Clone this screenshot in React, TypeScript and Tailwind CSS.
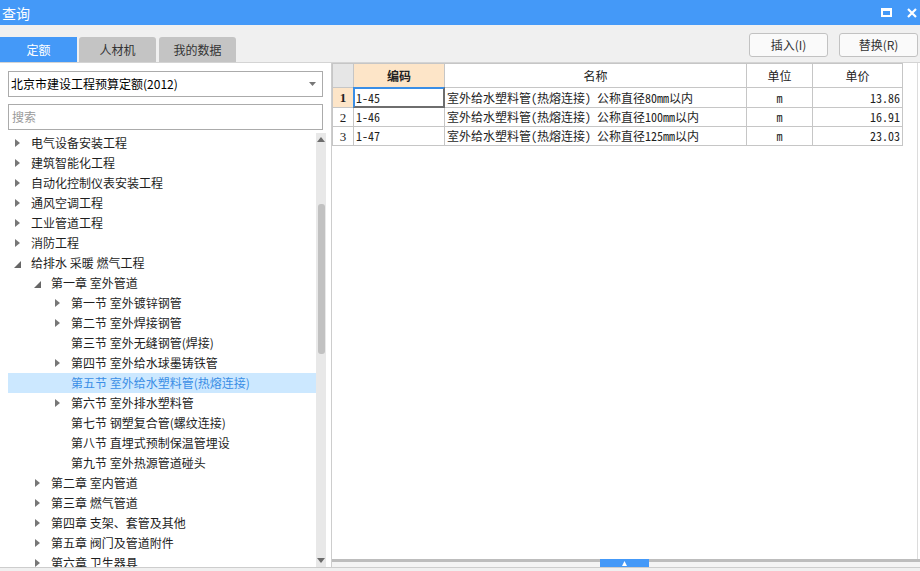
import React from 'react';

type Node = { level: 1 | 2 | 3; label: string; arrow: 'closed' | 'open' | 'none'; selected?: boolean };

const tree: Node[] = [
  { level: 1, label: '电气设备安装工程', arrow: 'closed' },
  { level: 1, label: '建筑智能化工程', arrow: 'closed' },
  { level: 1, label: '自动化控制仪表安装工程', arrow: 'closed' },
  { level: 1, label: '通风空调工程', arrow: 'closed' },
  { level: 1, label: '工业管道工程', arrow: 'closed' },
  { level: 1, label: '消防工程', arrow: 'closed' },
  { level: 1, label: '给排水 采暖 燃气工程', arrow: 'open' },
  { level: 2, label: '第一章 室外管道', arrow: 'open' },
  { level: 3, label: '第一节 室外镀锌钢管', arrow: 'closed' },
  { level: 3, label: '第二节 室外焊接钢管', arrow: 'closed' },
  { level: 3, label: '第三节 室外无缝钢管(焊接)', arrow: 'none' },
  { level: 3, label: '第四节 室外给水球墨铸铁管', arrow: 'closed' },
  { level: 3, label: '第五节 室外给水塑料管(热熔连接)', arrow: 'none', selected: true },
  { level: 3, label: '第六节 室外排水塑料管', arrow: 'closed' },
  { level: 3, label: '第七节 钢塑复合管(螺纹连接)', arrow: 'none' },
  { level: 3, label: '第八节 直埋式预制保温管埋设', arrow: 'none' },
  { level: 3, label: '第九节 室外热源管道碰头', arrow: 'none' },
  { level: 2, label: '第二章 室内管道', arrow: 'closed' },
  { level: 2, label: '第三章 燃气管道', arrow: 'closed' },
  { level: 2, label: '第四章 支架、套管及其他', arrow: 'closed' },
  { level: 2, label: '第五章 阀门及管道附件', arrow: 'closed' },
  { level: 2, label: '第六章 卫生器具', arrow: 'closed' },
];

const indent = { 1: 'pl-[7px]', 2: 'pl-[27px]', 3: 'pl-[47px]' };

const rows = [
  { no: '1', code: '1-45', name: '室外给水塑料管(热熔连接) 公称直径80mm以内', unit: 'm', price: '13.86' },
  { no: '2', code: '1-46', name: '室外给水塑料管(热熔连接) 公称直径100mm以内', unit: 'm', price: '16.91' },
  { no: '3', code: '1-47', name: '室外给水塑料管(热熔连接) 公称直径125mm以内', unit: 'm', price: '23.03' },
];

const Arrow = ({ kind }: { kind: Node['arrow'] }) => (
  <span className="w-[16px] h-[20px] flex items-center shrink-0">
    {kind === 'closed' && (
      <svg width="5" height="8" viewBox="0 0 5 8">
        <polygon points="0,0 5,4 0,8" fill="#777" />
      </svg>
    )}
    {kind === 'open' && (
      <svg width="7" height="7" viewBox="0 0 7 7" className="-ml-[1px] mt-[2px]">
        <polygon points="7,0 7,7 0,7" fill="#666" />
      </svg>
    )}
  </span>
);

const mono = "font-['Noto_Sans_Mono_CJK_SC','Liberation_Mono','Noto_Sans_CJK_SC',monospace]";

export default function App() {
  return (
    <div className="w-[920px] h-[571px] bg-[#f0f0f0] flex flex-col overflow-hidden font-['Noto_Sans_CJK_SC',sans-serif] text-[12px] text-[#1e1e1e]">
      {/* title bar */}
      <div className="h-[25px] bg-[#4499f8] flex items-center justify-between pl-[2px] pr-[2px] shrink-0">
        <span className="text-white text-[14px] leading-none">查询</span>
        <div className="flex items-center gap-[15px] pr-[1px]">
          <svg width="11" height="9" viewBox="0 0 11 9">
            <rect x="1" y="1.5" width="9" height="6.5" fill="none" stroke="#fff" strokeWidth="2" />
            <rect x="0" y="0" width="11" height="3" fill="#fff" />
          </svg>
          <svg width="10" height="10" viewBox="0 0 10 10">
            <path d="M1 1 L9 9 M9 1 L1 9" stroke="#fff" strokeWidth="2.2" />
          </svg>
        </div>
      </div>

      {/* tabs + buttons */}
      <div className="h-[38px] flex justify-between border-b border-[#d4d4d4] shrink-0">
        <div className="flex items-end gap-[2px] pt-[12px]">
          <div className="w-[77px] h-[25px] bg-[#4499f8] text-white flex items-center justify-center">定额</div>
          <div className="w-[77px] h-[25px] bg-[#c4c4c4] rounded-t-[3px] text-[#333] flex items-center justify-center">人材机</div>
          <div className="w-[77px] h-[25px] bg-[#c4c4c4] rounded-t-[3px] text-[#333] flex items-center justify-center ml-[1px]">我的数据</div>
        </div>
        <div className="flex gap-[11px] pt-[8px] pr-[2px]">
          <button className="w-[79px] h-[24px] bg-[#fafafa] border border-[#c2c2c2] rounded-[3px] text-[#333] text-[12px]">插入(I)</button>
          <button className="w-[79px] h-[24px] bg-[#fafafa] border border-[#c2c2c2] rounded-[3px] text-[#333] text-[12px]">替换(R)</button>
        </div>
      </div>

      {/* main */}
      <div className="h-[505px] flex border-b border-[#cdcdcd] shrink-0">
        {/* left panel */}
        <div className="w-[332px] bg-white flex flex-col pt-[8px] border-r border-[#cdcdcd] shrink-0">
          <div className="mx-[8px] h-[26px] border border-[#ababab] flex items-center justify-between pl-[2px] pr-[6px]">
            <span className="text-[12px] text-black">北京市建设工程预算定额(2012)</span>
            <svg width="7" height="4" viewBox="0 0 7 4">
              <polygon points="0,0 7,0 3.5,4" fill="#777" />
            </svg>
          </div>
          <div className="mx-[8px] mt-[7px] h-[26px] border border-[#ababab] flex items-center pl-[3px] text-[#9a9a9a]">搜索</div>
          <div className="flex flex-1 mt-[3px] overflow-hidden pl-[8px]">
            <div className="w-[308px] flex flex-col overflow-hidden">
              {tree.map((n, i) => (
                <div
                  key={i}
                  className={`h-[20px] flex items-center shrink-0 ${indent[n.level]} ${n.selected ? 'bg-[#cce8ff] text-[#3a8ee6]' : ''}`}
                >
                  <Arrow kind={n.arrow} />
                  <span className="whitespace-nowrap leading-[20px]">{n.label}</span>
                </div>
              ))}
            </div>
            <div className="w-[10px] bg-[#e8e8e8] flex flex-col items-center justify-between py-[4px]">
              <div className="flex flex-col items-center w-full">
                <svg width="8" height="5" viewBox="0 0 8 5">
                  <polygon points="0,5 8,5 4,0" fill="#6c6c6c" />
                </svg>
                <div className="w-[7px] h-[150px] mt-[62px] bg-[#c1c1c1] rounded-[3px]" />
              </div>
              <svg width="8" height="5" viewBox="0 0 8 5">
                <polygon points="0,0 8,0 4,5" fill="#6c6c6c" />
              </svg>
            </div>
          </div>
        </div>

        {/* right panel */}
        <div className="flex-1 bg-white flex flex-col">
          <div className="flex-1 flex pr-[2px]">
            <div className="flex-1">
              <table className="table-fixed border-collapse text-[12px]">
                <colgroup>
                  <col className="w-[21px]" />
                  <col className="w-[91px]" />
                  <col className="w-[302px]" />
                  <col className="w-[66px]" />
                  <col className="w-[90px]" />
                </colgroup>
                <thead>
                  <tr className="h-[24px]">
                    <th className="border border-[#c6c6c6] bg-[#e6e6e6]" />
                    <th className="border border-[#c6c6c6] bg-[#fde5c8] font-bold text-[#222]">编码</th>
                    <th className="border border-[#c6c6c6] font-normal text-[#222]">名称</th>
                    <th className="border border-[#c6c6c6] font-normal text-[#222]">单位</th>
                    <th className="border border-[#c6c6c6] font-normal text-[#222]">单价</th>
                  </tr>
                </thead>
                <tbody>
                  {rows.map((r, i) => (
                    <tr key={r.no} className={i === 0 ? 'h-[20px]' : 'h-[19px]'}>
                      <td
                        className={`border border-[#c6c6c6] text-center font-['Liberation_Serif',serif] text-[13px] leading-none ${i === 0 ? 'bg-[#fde5c8] font-bold' : ''}`}
                      >
                        {r.no}
                      </td>
                      <td className={`border border-[#c6c6c6] pl-[2px] leading-none relative ${mono}`}>
                        {i === 0 && (
                          <div className="absolute -inset-[1px] border-l-2 border-t-2 border-l-[#3a8ee6] border-t-[#3a8ee6] border-r-2 border-b-2 border-r-[#6e6e6e] border-b-[#6e6e6e]" />
                        )}
                        {r.code}
                      </td>
                      <td className={`border border-[#c6c6c6] pl-[2px] leading-none whitespace-nowrap overflow-hidden ${mono}`}>{r.name}</td>
                      <td className={`border border-[#c6c6c6] text-center leading-none ${mono}`}>{r.unit}</td>
                      <td className={`border border-[#c6c6c6] text-right pr-[2px] leading-none ${mono}`}>{r.price}</td>
                    </tr>
                  ))}
                </tbody>
              </table>
            </div>
            <div className="w-[1px] bg-[#dcdcdc]" />
          </div>
          <div className="h-[8px] flex shrink-0">
            <div className="w-[268px] flex flex-col">
              <div className="h-[3px] bg-[#bdbdbd]" />
              <div className="flex-1 bg-[#f4f4f4]" />
            </div>
            <div className="w-[49px] bg-[#4499f8] flex items-end justify-center pb-[1px]">
              <svg width="5" height="5" viewBox="0 0 5 5">
                <polygon points="0,5 5,5 2.5,0" fill="#fff" />
              </svg>
            </div>
            <div className="flex-1 flex flex-col">
              <div className="h-[3px] bg-[#bdbdbd]" />
              <div className="flex-1 bg-[#f4f4f4]" />
            </div>
          </div>
        </div>
      </div>
    </div>
  );
}
